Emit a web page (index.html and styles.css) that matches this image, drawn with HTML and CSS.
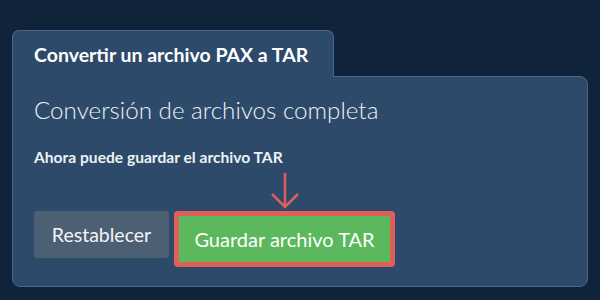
FILE: index.html
```html
<!DOCTYPE html>
<html lang="es">
<head>
    <meta charset="UTF-8">
    <meta name="viewport" content="width=device-width, initial-scale=1.0">
    <title>Convertir PAX a TAR</title>
    <link rel="stylesheet" href="styles.css">
</head>
<body>
    <div class="card">
        <div class="tab">Convertir un archivo PAX a TAR</div>
        <div class="panel">
            <h2 class="title">Conversión de archivos completa</h2>
            <p class="note">Ahora puede guardar el archivo TAR</p>
            <div class="btn-row">
                <button type="button" class="reset-btn">Restablecer</button>
                <div class="save-wrap">
                    <svg class="arrow" width="30" height="36" viewBox="0 0 30 36">
                        <path d="M15 0 V34 M2 21 L15 34 L28 21" fill="none" stroke="#df5f5a" stroke-width="2.5"/>
                    </svg>
                    <button type="button" class="save-btn">Guardar archivo TAR</button>
                </div>
            </div>
        </div>
    </div>
</body>
</html>
```

FILE: styles.css
```css
body{
    margin: 0;
    background-color: #10233a;
    font-family: Lato, "Noto Sans", sans-serif;
    color: #f2f4f7;
}
.card{
    padding: 30px 12px 0 12px;
}
.tab{
    display: inline-block;
    box-sizing: border-box;
    width: 322px;
    height: 47px;
    padding: 12px 0 0 21px;
    background-color: #2d4a6b;
    border: 1px solid #4b6688;
    border-bottom: none;
    border-radius: 7px 7px 0 0;
    font-size: 19.5px;
    font-weight: 700;
    color: #ffffff;
    position: relative;
    z-index: 1;
    margin-bottom: -1px;
}
.panel{
    box-sizing: border-box;
    width: 576px;
    height: 211px;
    padding: 18px 21px 0 21px;
    background-color: #2d4a6b;
    border: 1px solid #4b6688;
    border-radius: 0 8px 8px 8px;
}
.title{
    margin: 0;
    height: 30px;
    font-size: 24.2px;
    line-height: 30px;
    font-weight: 300;
    color: #eef1f5;
}
.note{
    margin: 23px 0 0 0;
    font-size: 15.6px;
    font-weight: 700;
    color: #eef1f5;
}
.btn-row{
    display: flex;
    align-items: flex-end;
    margin-top: 7px;
}
.reset-btn{
    box-sizing: border-box;
    height: 47px;
    width: 135px;
    margin-bottom: 9px;
    background-color: #4d5f72;
    border: none;
    border-radius: 3px;
    color: #f2f4f7;
    font-family: Lato, "Noto Sans", sans-serif;
    font-size: 19.5px;
}
.save-wrap{
    display: flex;
    flex-direction: column;
    align-items: center;
    margin-left: 5px;
}
.arrow{
    display: block;
    margin-bottom: 2px;
}
.save-btn{
    box-sizing: border-box;
    height: 56px;
    width: 221px;
    background-color: #5cb85c;
    border: 5px solid #df5f5a;
    border-radius: 4px;
    color: #ffffff;
    font-family: Lato, "Noto Sans", sans-serif;
    font-size: 20px;
}
```
